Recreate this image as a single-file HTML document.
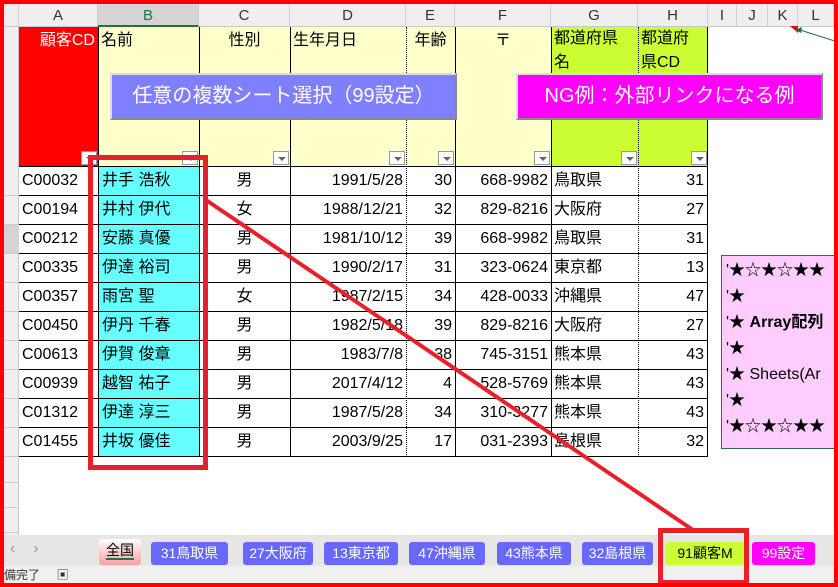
<!DOCTYPE html>
<html><head><meta charset="utf-8"><style>
*{margin:0;padding:0;box-sizing:border-box}
body{width:838px;height:587px;overflow:hidden;background:#fff;font-family:"Liberation Sans","Noto Sans CJK JP",sans-serif;position:relative}
.a{position:absolute}
.ch{position:absolute;top:4px;height:23px;background:#efefef;border-right:1px solid #d0d0d0;border-bottom:1px solid #c8c8c8;font-size:15px;text-align:center;line-height:23px;color:#333}
.c{position:absolute;font-size:16px;line-height:28px;white-space:nowrap;overflow:hidden;color:#000}
.hl{position:absolute;height:1px;background:#000}
.vl{position:absolute;width:1px;background:#000}
.dd{position:absolute;width:16px;height:14px;border:1px solid #999;background:#fff}
.dd:after{content:"";position:absolute;left:4px;top:5px;border-left:4px solid transparent;border-right:4px solid transparent;border-top:4px solid #666}
.tab{position:absolute;top:542px;height:23px;border-radius:3px;background:#6868ff;color:#fff;font-size:14px;line-height:23px;text-align:center}
</style></head><body>
<div class="ch" style="left:4px;width:15px"></div>
<div class="ch" style="left:19px;width:79px">A</div>
<div class="ch" style="left:98px;width:101px;background:#d4d4d4;color:#217346;border-bottom:2px solid #217346">B</div>
<div class="ch" style="left:199px;width:91px">C</div>
<div class="ch" style="left:290px;width:116px">D</div>
<div class="ch" style="left:406px;width:49px">E</div>
<div class="ch" style="left:455px;width:96px">F</div>
<div class="ch" style="left:551px;width:87px">G</div>
<div class="ch" style="left:638px;width:70px">H</div>
<div class="ch" style="left:708px;width:29px">I</div>
<div class="ch" style="left:737px;width:31px">J</div>
<div class="ch" style="left:768px;width:30px">K</div>
<div class="ch" style="left:798px;width:36px">L</div>
<div class="a" style="left:4px;top:27px;width:15px;height:508px;background:#efefef;border-right:1px solid #c8c8c8"></div>
<div class="a" style="left:4px;top:225px;width:15px;height:29px;background:#d4d4d4"></div>
<div class="a" style="left:19px;top:27px;width:79px;height:140px;background:#f00"></div>
<div class="a" style="left:98px;top:27px;width:453px;height:140px;background:#ffffcc"></div>
<div class="a" style="left:551px;top:27px;width:157px;height:140px;background:#ccff33"></div>
<div class="c" style="left:19px;top:27px;width:78px;text-align:right;color:#fff;padding-right:2px">顧客CD</div>
<div class="c" style="left:101px;top:27px">名前</div>
<div class="c" style="left:199px;top:27px;width:91px;text-align:center">性別</div>
<div class="c" style="left:293px;top:27px">生年月日</div>
<div class="c" style="left:406px;top:27px;width:49px;text-align:center">年齢</div>
<div class="c" style="left:455px;top:27px;width:96px;text-align:center">〒</div>
<div class="c" style="left:554px;top:27px;line-height:24px;white-space:normal;width:84px">都道府県<br>名</div>
<div class="c" style="left:641px;top:27px;line-height:24px;white-space:normal;width:66px">都道府<br>県CD</div>
<div class="dd" style="left:81px;top:151px"></div><div class="dd" style="left:182px;top:151px"></div>
<div class="dd" style="left:273px;top:151px"></div><div class="dd" style="left:389px;top:151px"></div>
<div class="dd" style="left:438px;top:151px"></div><div class="dd" style="left:534px;top:151px"></div>
<div class="dd" style="left:621px;top:151px"></div><div class="dd" style="left:691px;top:151px"></div>
<div class="a" style="left:98px;top:167px;width:101px;height:290px;background:#66ffff"></div>
<div class="vl" style="left:98px;top:27px;height:430px"></div>
<div class="vl" style="left:199px;top:27px;height:430px"></div>
<div class="vl" style="left:290px;top:27px;height:430px"></div>
<div class="vl" style="left:406px;top:27px;height:430px;background:none;border-left:1px dotted #000"></div>
<div class="vl" style="left:455px;top:27px;height:430px"></div>
<div class="vl" style="left:551px;top:27px;height:430px"></div>
<div class="vl" style="left:638px;top:27px;height:430px;background:none;border-left:1px dotted #000"></div>
<div class="vl" style="left:707px;top:27px;height:430px"></div>
<div id="rows"></div>
<script>
var d=[["C00032","井手 浩秋","男","1991/5/28","30","668-9982","鳥取県","31"],["C00194","井村 伊代","女","1988/12/21","32","829-8216","大阪府","27"],["C00212","安藤 真優","男","1981/10/12","39","668-9982","鳥取県","31"],["C00335","伊達 裕司","男","1990/2/17","31","323-0624","東京都","13"],["C00357","雨宮 聖","女","1987/2/15","34","428-0033","沖縄県","47"],["C00450","伊丹 千春","男","1982/5/18","39","829-8216","大阪府","27"],["C00613","伊賀 俊章","男","1983/7/8","38","745-3151","熊本県","43"],["C00939","越智 祐子","男","2017/4/12","4","528-5769","熊本県","43"],["C01312","伊達 淳三","男","1987/5/28","34","310-3277","熊本県","43"],["C01455","井坂 優佳","男","2003/9/25","17","031-2393","島根県","32"]];
var h="";
for(var i=0;i<10;i++){var t=167+i*29,r=d[i];
h+='<div class="hl" style="left:19px;top:'+(t+28)+'px;width:689px"></div>';
h+='<div class="hl" style="left:4px;top:'+(t+28)+'px;width:15px;background:#ccc"></div>';
h+='<div class="c" style="left:22px;top:'+t+'px;width:76px">'+r[0]+'</div>';
h+='<div class="c" style="left:102px;top:'+t+'px">'+r[1]+'</div>';
h+='<div class="c" style="left:199px;top:'+t+'px;width:91px;text-align:center">'+r[2]+'</div>';
h+='<div class="c" style="left:290px;top:'+t+'px;width:113px;text-align:right">'+r[3]+'</div>';
h+='<div class="c" style="left:406px;top:'+t+'px;width:46px;text-align:right">'+r[4]+'</div>';
h+='<div class="c" style="left:455px;top:'+t+'px;width:95px;text-align:right;padding-right:2px">'+r[5]+'</div>';
h+='<div class="c" style="left:554px;top:'+t+'px">'+r[6]+'</div>';
h+='<div class="c" style="left:638px;top:'+t+'px;width:66px;text-align:right">'+r[7]+'</div>';}
h+='<div class="hl" style="left:19px;top:166px;width:689px"></div>';
for(var j=0;j<3;j++)h+='<div class="hl" style="left:4px;top:'+(482+j*25)+'px;width:15px;background:#ccc"></div>';
document.getElementById("rows").innerHTML=h;
</script>
<div class="a" style="left:110px;top:73px;width:347px;height:47px;background:#7f7fff;border:2px solid #ddd;border-right-color:#888;border-bottom-color:#888;color:#fff;font-size:20px;line-height:42px;text-align:center">任意の複数シート選択（99設定）</div>
<div class="a" style="left:516px;top:73px;width:307px;height:47px;background:#ff00ff;border:2px solid #ddd;border-right-color:#888;border-bottom-color:#888;color:#fff;font-size:20px;line-height:42px;text-align:center">NG例：外部リンクになる例</div>
<div class="a" style="left:721px;top:255px;width:120px;height:194px;background:#ffccff;border:1px solid #2e6b4a;font-size:16px;line-height:26px;padding:2px 0 0 4px;white-space:nowrap;overflow:hidden">'★☆★☆★★<br>'★<br>'★ <b>Array配列</b><br>'★<br>'★ Sheets(Ar<br>'★<br>'★☆★☆★★</div>
<svg class="a" style="left:790px;top:26px" width="48" height="20"><polygon points="0,0 8,0 8,7" fill="#f00"/><polygon points="5,4 12,1 11,7" fill="#2e6b4a"/><line x1="10" y1="4" x2="48" y2="16" stroke="#2e6b4a"/></svg>
<div class="a" style="left:4px;top:535px;width:830px;height:31px;background:#e6e6e6"></div>
<div class="a" style="left:10px;top:540px;color:#999;font-size:16px">‹&nbsp;&nbsp;&nbsp;&nbsp;›</div>
<div class="tab" style="left:99px;top:539px;width:42px;height:26px;background:linear-gradient(#fff,#f4a0a0);color:#000"><span style="border-bottom:2px solid #217346">全国</span></div>
<div class="tab" style="left:151px;width:77px">31鳥取県</div>
<div class="tab" style="left:243px;width:70px">27大阪府</div>
<div class="tab" style="left:324px;width:74px">13東京都</div>
<div class="tab" style="left:409px;width:76px">47沖縄県</div>
<div class="tab" style="left:497px;width:74px">43熊本県</div>
<div class="tab" style="left:582px;width:71px">32島根県</div>
<div class="tab" style="left:665px;width:80px;background:#ccff33;color:#000">91顧客M</div>
<div class="tab" style="left:752px;width:63px;background:#ff00ff">99設定</div>
<div class="a" style="left:4px;top:566px;width:830px;height:17px;background:#f0f0f0;font-size:12px;line-height:18px;color:#333">備完了 &nbsp;&nbsp;&nbsp;&nbsp;▣</div>
<svg class="a" style="left:0;top:0" width="838" height="587">
<rect x="90.5" y="157.5" width="115" height="310" fill="none" stroke="#e8202a" stroke-width="5"/>
<rect x="660.5" y="530.5" width="86" height="52" fill="none" stroke="#e8202a" stroke-width="5"/>
<line x1="206" y1="200" x2="693" y2="530" stroke="#e8202a" stroke-width="4"/>
<rect x="2" y="2" width="834" height="583" fill="none" stroke="#f00" stroke-width="4"/>
</svg>
</body></html>
